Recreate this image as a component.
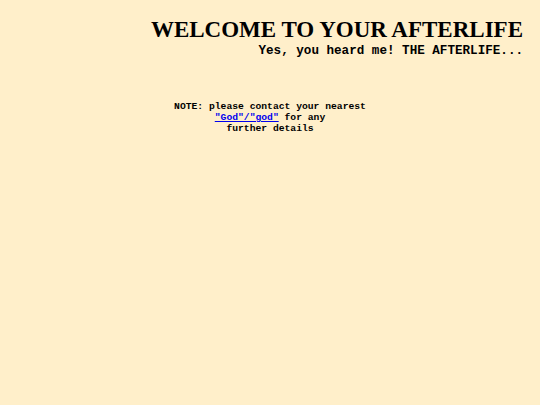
export default function App() {
  return (
    <div className="min-h-[405px] w-full bg-[#ffefca] text-black">
      <div className="pr-[17px] pt-[16px] text-right">
        <h1 className="font-['Liberation_Serif',serif] text-[23px] font-bold leading-[28px]">
          WELCOME TO YOUR AFTERLIFE
        </h1>
        <p className="font-['Liberation_Mono',monospace] text-[12.6px] font-bold leading-[15px]">
          Yes, you heard me! THE AFTERLIFE...
        </p>
      </div>
      <div className="mt-[42px] text-center font-['Liberation_Mono',monospace] text-[9.7px] font-bold leading-[11px]">
        NOTE: please contact your nearest
        <br />
        <a href="#" className="text-[#0000ee] underline">
          "God"/"god"
        </a>{' '}
        for any
        <br />
        further details
      </div>
    </div>
  );
}
